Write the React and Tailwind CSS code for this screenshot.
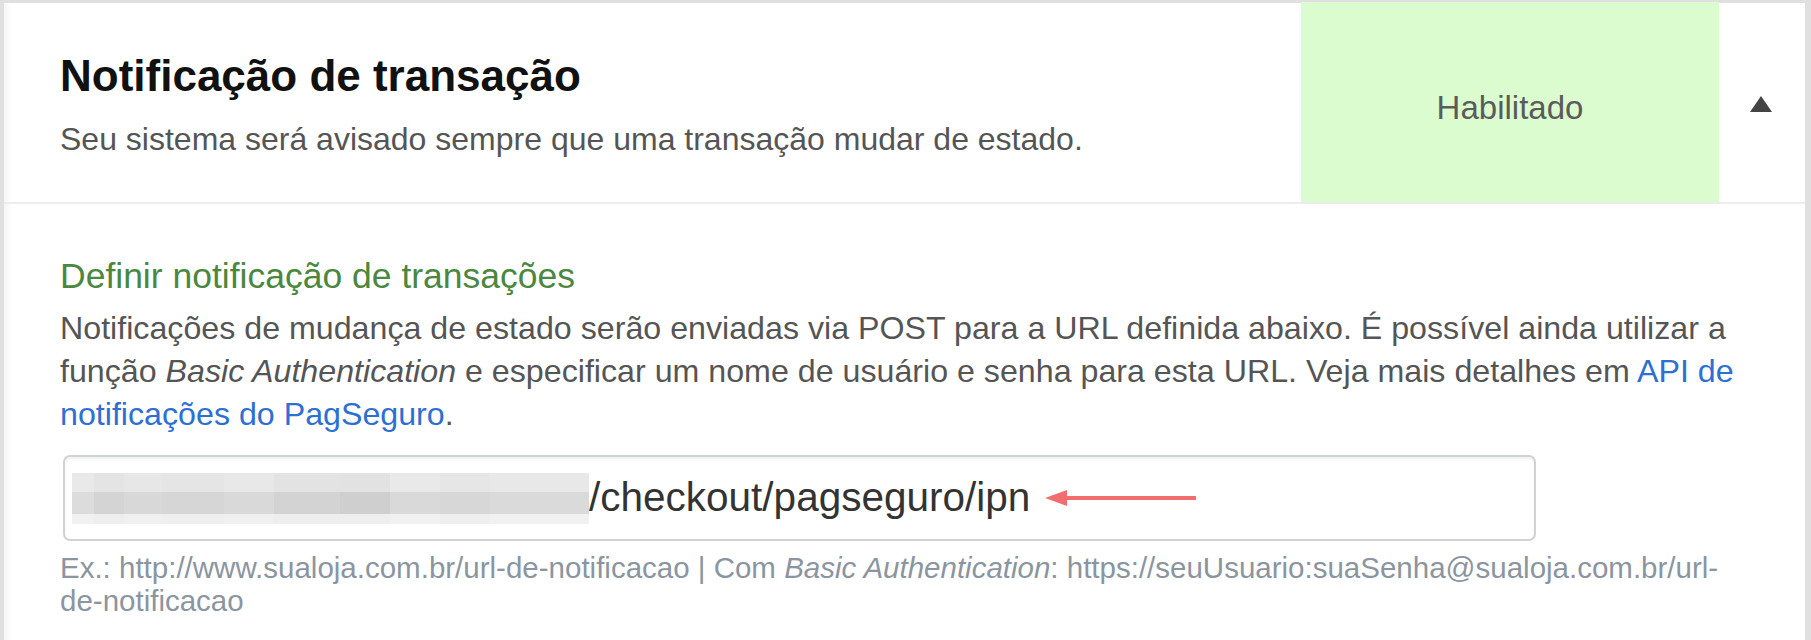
import React from "react";

const font = { fontFamily: '"Liberation Sans", Arial, sans-serif' };

// pixelated blur columns: [width, top, middle, bottom]
const blurCols = [
  [22, "#e9e9e9", "#dcdcdc", "#f1f1f1"],
  [30, "#e4e4e4", "#d4d4d4", "#eeeeee"],
  [38, "#e7e7e7", "#d8d8d8", "#f0f0f0"],
  [62, "#e5e5e5", "#d6d6d6", "#efefef"],
  [50, "#e8e8e8", "#d9d9d9", "#f0f0f0"],
  [66, "#e3e3e3", "#d3d3d3", "#eeeeee"],
  [50, "#e2e2e2", "#cfcfcf", "#eeeeee"],
  [50, "#e9e9e9", "#d9d9d9", "#f1f1f1"],
  [50, "#e6e6e6", "#d7d7d7", "#efefef"],
  [99, "#e8e8e8", "#dadada", "#f1f1f1"],
];

const BlurredHost = () => (
  <div className="flex h-[51px] shrink-0">
    {blurCols.map(([w, a, b, c], i) => (
      <div key={i} className="flex flex-col" style={{ width: w }}>
        <div className="h-[19px]" style={{ background: a }} />
        <div className="h-[22px]" style={{ background: b }} />
        <div className="h-[10px]" style={{ background: c }} />
      </div>
    ))}
  </div>
);

export default function App() {
  return (
    <div className="w-[1811px] h-[640px] overflow-hidden bg-[#e0e0e0] pl-[4px] pt-[3px] pr-[6px]" style={font}>
      <div className="h-full bg-white shadow-[inset_8px_0_8px_-6px_rgba(0,0,0,0.06)]">
        {/* header */}
        <div className="flex border-b-2 border-[#ececec]">
          <div className="flex-1 pl-[56px] pt-[50px] pb-[43px]">
            <h1 className="text-[44px] leading-[46px] font-bold text-[#111]">Notificação de transação</h1>
            <p className="mt-[20px] text-[32px] leading-[40px] text-[#555]">
              Seu sistema será avisado sempre que uma transação mudar de estado.
            </p>
          </div>
          <div className="w-[418px] bg-[#dafccf] flex items-center justify-center -mt-[1px]">
            <span className="text-[33px] text-[#5b5b5b] mt-[12px]">Habilitado</span>
          </div>
          <div className="w-[86px] flex items-center justify-center">
            <svg width="22" height="16" viewBox="0 0 22 16" className="mt-[2px] -ml-[3px]">
              <polygon points="11,0 22,16 0,16" fill="#444" />
            </svg>
          </div>
        </div>

        {/* body */}
        <div className="pl-[56px] pr-[56px] pt-[50px]">
          <h2 className="text-[35.5px] leading-[44px] text-[#4b8740]">Definir notificação de transações</h2>
          <p className="mt-[9px] text-[32.2px] leading-[43px] text-[#555]">
            Notificações de mudança de estado serão enviadas via POST para a URL definida abaixo. É possível ainda utilizar a
            função <em>Basic Authentication</em> e especificar um nome de usuário e senha para esta URL. Veja mais detalhes em{" "}
            <a className="text-[#2d6fd2]">API de notificações do PagSeguro</a>.
          </p>

          <div className="relative mt-[19px] ml-[3px] w-[1473px] h-[86px] rounded-[7px] border-2 border-[#cfd3d7] shadow-[inset_0_2px_3px_rgba(0,0,0,0.06)] flex items-center pl-[7px]">
            <BlurredHost />
            <span className="text-[40.5px] text-[#333] -mt-[2px]">/checkout/pagseguro/ipn</span>
            <svg className="absolute left-[980px] top-[32px]" width="152" height="18" viewBox="0 0 152 18">
              <line x1="18" y1="9" x2="151" y2="9" stroke="#f26d6d" strokeWidth="4" />
              <polygon points="0,9 22,1 22,17" fill="#f26d6d" />
            </svg>
          </div>

          <p className="mt-[10px] text-[29.5px] leading-[33px] text-[#8b959f]">
            Ex.: http://www.sualoja.com.br/url-de-notificacao | Com <em>Basic Authentication</em>:
            https://seuUsuario:suaSenha@sualoja.com.br/url-de-notificacao
          </p>
        </div>
      </div>
    </div>
  );
}
